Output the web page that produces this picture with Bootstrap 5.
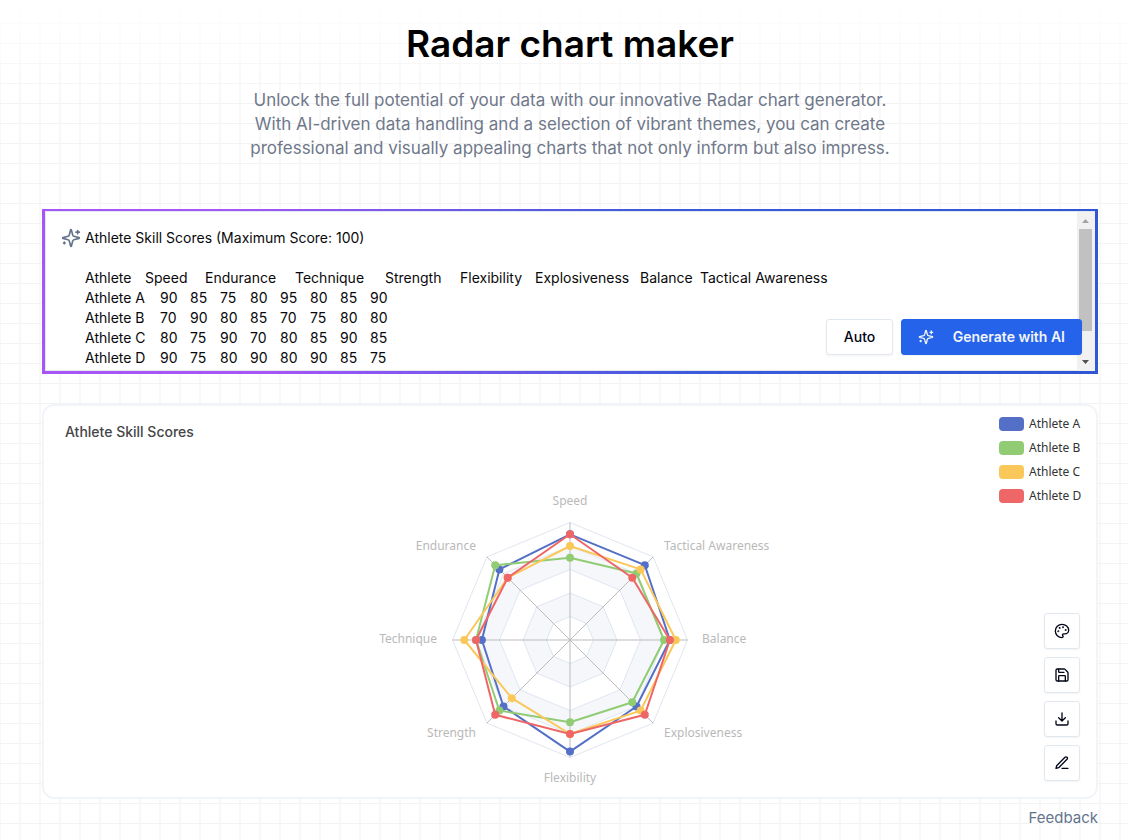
<!DOCTYPE html>
<html lang="en">
<head>
<meta charset="utf-8">
<meta name="viewport" content="width=device-width, initial-scale=1">
<title>Radar chart maker</title>
<link href="https://cdn.jsdelivr.net/npm/bootstrap@5.3.0/dist/css/bootstrap.min.css" rel="stylesheet">
<style>
  body { font-family: Inter, "Noto Sans", sans-serif; font-size: 14px; color: #020617; background: #fff; }
  .grid-paper { position: relative; isolation: isolate; min-height: 100vh; padding: 22px 30px 10px 42px; }
  .grid-paper::before {
    content: ""; position: absolute; inset: 0; z-index: -1;
    background-image:
      linear-gradient(#f3f3f3 1px, transparent 1px),
      linear-gradient(90deg, #f8f8f8 2px, transparent 2px);
    background-size: 20px 20px;
    background-position: 0 3px, -1px 0;
    -webkit-mask-image: linear-gradient(transparent, #000 90px);
    mask-image: linear-gradient(transparent, #000 90px);
  }
  .page-title { font-size: 37px; line-height: 44px; font-weight: 600; color: #000; }
  .intro { font-size: 17px; line-height: 24px; color: #6f788a; max-width: 680px; margin-top: 22px; }
  .prompt-frame { margin-top: 49px; padding: 2px 3px 3px; background: linear-gradient(75deg, #a855f7 20%, #3b5bdb 60%, #3056d3); }
  .prompt-box { background: #fff; border: 1px solid #e2e8f0; padding: 16px 15px; height: 160px; overflow: hidden; }
  .prompt-text {
    height: 142px; padding: 0; border: 0; outline: 0; resize: none; overflow: hidden; background: transparent;
    font-size: 14px; line-height: 20px; color: #09090b; tab-size: 15px; -moz-tab-size: 15px;
  }
  .spark { color: #64748b; }
  .scroll-track { top: 3px; right: 3px; bottom: 3px; width: 18px; background: #f1f1f1; padding: 0 3px 0 2px; }
  .scroll-thumb { background: #c1c1c1; height: 102px; }
  .prompt-actions { right: 16px; bottom: 19px; }
  .tool-btn { height: 36px; border: 1px solid #e2e8f0; border-radius: 3px; background: #fff; color: #020617;
    font-size: 14px; line-height: 20px; font-weight: 500; box-shadow: 0 1px 2px rgba(0,0,0,.05); }
  .tool-btn:hover { background: #f1f5f9; }
  .tool-btn.auto { min-width: 67px; }
  .tool-btn.primary { min-width: 181px; background: #2563eb; border-color: #2563eb; color: #f1f5f9; font-weight: 600; }
  .square { width: 36px; }
  .chart-card { margin-top: 30px; border: 2px solid #f1f5f9; border-radius: 12px; background: #fff; height: 395px; }
  .chart-title { font-size: 14px; line-height: 20px; font-weight: 500; color: #464646; top: 16px; left: 21px; }
  .legend-list { top: 6px; right: 13px; width: 84px; font: 12px/24px "Noto Sans", sans-serif; color: #333; }
  .legend-list li { gap: 5px; }
  .swatch { width: 25px; height: 14px; border-radius: 4px; }
  .chart-tools { right: 16px; bottom: 16px; }
  .axis-name { font: 12px "Noto Sans", sans-serif; fill: #b9b9b9; }
  .feedback { font-size: 15px; line-height: 20px; color: #64748b; }
</style>
</head>
<body>
<div class="grid-paper">
  <header class="text-center">
    <h1 class="page-title mb-0">Radar chart maker</h1>
    <p class="intro mx-auto mb-0">Unlock the full potential of your data with our innovative Radar chart generator.<br>With AI-driven data handling and a selection of vibrant themes, you can create<br>professional and visually appealing charts that not only inform but also impress.</p>
  </header>

  <main>
    <section class="prompt-frame position-relative">
      <div class="prompt-box d-flex align-items-start">
        <svg class="spark flex-shrink-0" width="20" height="20" viewBox="0 0 24 24" fill="none" stroke="currentColor" stroke-width="2" stroke-linecap="round" stroke-linejoin="round" aria-hidden="true"><path d="M9.937 15.5A2 2 0 0 0 8.5 14.063l-6.135-1.582a.5.5 0 0 1 0-.962L8.5 9.936A2 2 0 0 0 9.937 8.5l1.582-6.135a.5.5 0 0 1 .963 0L14.063 8.5A2 2 0 0 0 15.5 9.937l6.135 1.581a.5.5 0 0 1 0 .964L15.5 14.063a2 2 0 0 0-1.437 1.437l-1.582 6.135a.5.5 0 0 1-.963 0z"/><path d="M20 3v4M22 5h-4M4 17v2M5 18H3"/></svg>
        <textarea class="prompt-text flex-grow-1 ms-1" aria-label="Chart data" spellcheck="false">Athlete Skill Scores (Maximum Score: 100)

Athlete	Speed		Endurance		Technique		Strength		Flexibility	Explosiveness	Balance	Tactical Awareness
Athlete A	90	85	75	80	95	80	85	90
Athlete B	70	90	80	85	70	75	80	80
Athlete C	80	75	90	70	80	85	90	85
Athlete D	90	75	80	90	80	90	85	75</textarea>
      </div>
      <div class="scroll-track position-absolute d-flex flex-column" aria-hidden="true">
        <svg width="13" height="17" viewBox="0 0 13 17"><path d="M3 11h7L6.500 7z" fill="#a3a3a3"/></svg>
        <div class="scroll-thumb"></div>
        <svg class="mt-auto" width="13" height="17" viewBox="0 0 13 17"><path d="M3 6h7L6.500 10z" fill="#505050"/></svg>
      </div>
      <div class="prompt-actions position-absolute d-flex gap-2">
        <button type="button" class="tool-btn auto">Auto</button>
        <button type="button" class="tool-btn primary px-3 d-flex align-items-center justify-content-between"><svg width="16" height="16" viewBox="0 0 24 24" fill="none" stroke="currentColor" stroke-width="2" stroke-linecap="round" stroke-linejoin="round" aria-hidden="true"><path d="M9.937 15.5A2 2 0 0 0 8.5 14.063l-6.135-1.582a.5.5 0 0 1 0-.962L8.5 9.936A2 2 0 0 0 9.937 8.5l1.582-6.135a.5.5 0 0 1 .963 0L14.063 8.5A2 2 0 0 0 15.5 9.937l6.135 1.581a.5.5 0 0 1 0 .964L15.5 14.063a2 2 0 0 0-1.437 1.437l-1.582 6.135a.5.5 0 0 1-.963 0z"/><path d="M20 3v4M22 5h-4M4 17v2M5 18H3"/></svg>Generate with AI</button>
      </div>
    </section>

    <section class="chart-card position-relative">
      <h2 class="chart-title position-absolute m-0">Athlete Skill Scores</h2>
      <svg class="d-block mx-auto" width="440" height="390" viewBox="350 406 440 390" role="img" aria-label="Radar chart of athlete skill scores">
        <g id="rings"></g>
        <g id="series"></g>
        <g class="axis-name">
          <text x="570" y="505" text-anchor="middle">Speed</text>
          <text x="476" y="550" text-anchor="end">Endurance</text>
          <text x="437" y="643" text-anchor="end">Technique</text>
          <text x="476" y="737" text-anchor="end">Strength</text>
          <text x="570" y="782" text-anchor="middle">Flexibility</text>
          <text x="664" y="737">Explosiveness</text>
          <text x="702" y="643">Balance</text>
          <text x="664" y="550">Tactical Awareness</text>
        </g>
      </svg>
      <ul class="legend-list list-unstyled position-absolute m-0" id="legend"></ul>
      <div class="chart-tools position-absolute d-flex flex-column gap-2">
        <button type="button" class="tool-btn square p-0 d-flex align-items-center justify-content-center" aria-label="Theme"><svg width="16" height="16" viewBox="0 0 24 24" fill="none" stroke="currentColor" stroke-width="2" stroke-linecap="round" stroke-linejoin="round"><circle cx="13.500" cy="6.500" r=".5" fill="currentColor"/><circle cx="17.500" cy="10.500" r=".5" fill="currentColor"/><circle cx="8.500" cy="7.500" r=".5" fill="currentColor"/><circle cx="6.500" cy="12.500" r=".5" fill="currentColor"/><path d="M12 2C6.500 2 2 6.500 2 12s4.500 10 10 10c.926 0 1.648-.746 1.648-1.688 0-.437-.18-.835-.437-1.125-.29-.289-.438-.652-.438-1.125a1.640 1.640 0 0 1 1.668-1.668h1.996c3.051 0 5.555-2.503 5.555-5.554C21.965 6.012 17.461 2 12 2z"/></svg></button>
        <button type="button" class="tool-btn square p-0 d-flex align-items-center justify-content-center" aria-label="Save"><svg width="16" height="16" viewBox="0 0 24 24" fill="none" stroke="currentColor" stroke-width="2" stroke-linecap="round" stroke-linejoin="round"><path d="M15.200 3a2 2 0 0 1 1.400.6l3.800 3.800a2 2 0 0 1 .6 1.400V19a2 2 0 0 1-2 2H5a2 2 0 0 1-2-2V5a2 2 0 0 1 2-2z"/><path d="M17 21v-7a1 1 0 0 0-1-1H8a1 1 0 0 0-1 1v7M7 3v4a1 1 0 0 0 1 1h7"/></svg></button>
        <button type="button" class="tool-btn square p-0 d-flex align-items-center justify-content-center" aria-label="Download"><svg width="16" height="16" viewBox="0 0 24 24" fill="none" stroke="currentColor" stroke-width="2" stroke-linecap="round" stroke-linejoin="round"><path d="M21 15v4a2 2 0 0 1-2 2H5a2 2 0 0 1-2-2v-4M7 10l5 5 5-5M12 15V3"/></svg></button>
        <button type="button" class="tool-btn square p-0 d-flex align-items-center justify-content-center" aria-label="Edit"><svg width="16" height="16" viewBox="0 0 24 24" fill="none" stroke="currentColor" stroke-width="2" stroke-linecap="round" stroke-linejoin="round"><path d="M12 20h9M16.500 3.500a2.120 2.120 0 0 1 3 3L7 19l-4 1 1-4z"/></svg></button>
      </div>
    </section>
  </main>

  <footer class="text-end mt-2">
    <a class="feedback text-decoration-none" href="#">Feedback</a>
  </footer>
</div>

<script src="https://cdn.jsdelivr.net/npm/bootstrap@5.3.0/dist/js/bootstrap.bundle.min.js"></script>
<script>
  // Values run counter-clockwise from Speed, on a scale of 0 to 100.
  const series = [
    { name: 'Athlete A', color: '#5470c6', values: [90, 85, 75, 80, 95, 80, 85, 90] },
    { name: 'Athlete B', color: '#91cc75', values: [70, 90, 80, 85, 70, 75, 80, 80] },
    { name: 'Athlete C', color: '#fac858', values: [80, 75, 90, 70, 80, 85, 90, 85] },
    { name: 'Athlete D', color: '#ee6666', values: [90, 75, 80, 90, 80, 90, 85, 75] }
  ];
  const cx = 570, cy = 640, radius = 117.5;
  const point = (value, i) => {
    const a = Math.PI / 2 + i * Math.PI / 4, r = radius * value / 100;
    return [(cx + r * Math.cos(a)).toFixed(1), (cy - r * Math.sin(a)).toFixed(1)];
  };
  const poly = values => values.map((v, i) => point(v, i).join()).join(' ');

  document.getElementById('rings').innerHTML =
    [100, 80, 60, 40, 20].map((v, n) =>
      `<polygon points="${poly(Array(8).fill(v))}" fill="${n % 2 ? '#f5f7fb' : '#fff'}" stroke="#e0e6f1"/>`).join('') +
    [0, 1, 2, 3, 4, 5, 6, 7].map(i => {
      const [x, y] = point(100, i);
      return `<line x1="${cx}" y1="${cy}" x2="${x}" y2="${y}" stroke="#bbb"/>`;
    }).join('');

  document.getElementById('series').innerHTML = series.map(s =>
    `<polygon points="${poly(s.values)}" fill="none" stroke="${s.color}" stroke-width="2" stroke-linejoin="bevel"/>` +
    s.values.map((v, i) => {
      const [x, y] = point(v, i);
      return `<circle cx="${x}" cy="${y}" r="4" fill="${s.color}"/>`;
    }).join('')).join('');

  document.getElementById('legend').innerHTML = series.map(s =>
    `<li class="d-flex align-items-center"><span class="swatch" style="background:${s.color}"></span>${s.name}</li>`).join('');
</script>
</body>
</html>
